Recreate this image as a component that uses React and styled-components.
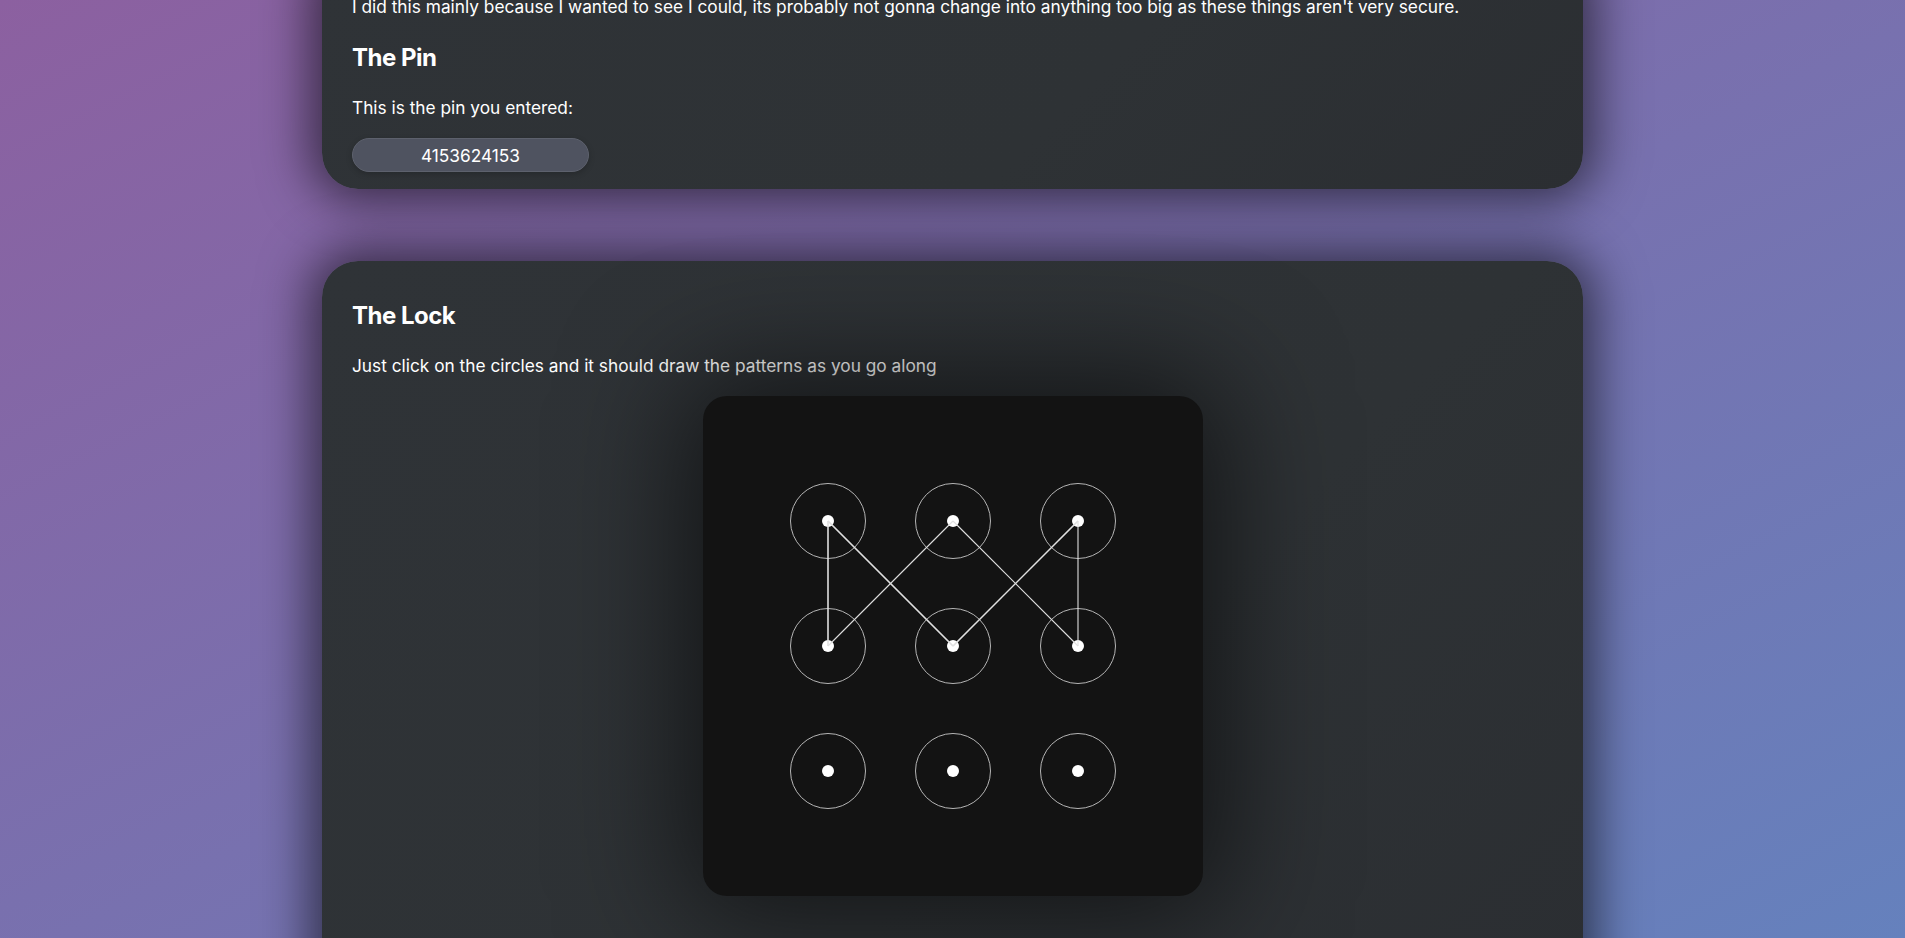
import React from 'react';
import styled, { createGlobalStyle } from 'styled-components';

const GlobalStyle = createGlobalStyle`
  html, body {
    margin: 0;
    padding: 0;
  }
  body {
    font-family: 'Inter', 'Noto Sans', sans-serif;
    color: #fff;
    background: linear-gradient(to bottom right, #8c60a0, #6581bd);
    min-height: 100vh;
  }
`;

// grid order 1..9, left to right, top to bottom
const PIN = '4153624153';
const CELL = 125;

function centre(n) {
  const i = Number(n) - 1;
  return { x: CELL + (i % 3) * CELL, y: CELL + Math.floor(i / 3) * CELL };
}

export default function App() {
  const digits = PIN.split('');
  const segments = digits.slice(1).map((d, i) => [centre(digits[i]), centre(d)]);

  return (
    <>
      <GlobalStyle />
      <Page>
        <Card $top>
          <Text>
            I did this mainly because I wanted to see I could, its probably not gonna change into anything too big as
            these things aren't very secure.
          </Text>
          <Heading>The Pin</Heading>
          <Text>This is the pin you entered:</Text>
          <PinPill>{PIN}</PinPill>
        </Card>

        <Card>
          <Heading>The Lock</Heading>
          <Text>Just click on the circles and it should draw the patterns as you go along</Text>
          <LockBox>
            <Grid>
              {Array.from({ length: 9 }, (_, i) => (
                <Cell key={i}>
                  <Ring>
                    <Dot />
                  </Ring>
                </Cell>
              ))}
            </Grid>
            <Lines viewBox="0 0 500 500">
              {segments.map(([a, b], i) => (
                <line key={i} x1={a.x} y1={a.y} x2={b.x} y2={b.y} />
              ))}
            </Lines>
          </LockBox>
        </Card>
      </Page>
    </>
  );
}

const Page = styled.div`
  height: 100vh;
  overflow: hidden;
  display: flex;
  flex-direction: column;
  align-items: center;
  gap: 72px;
`;

const Card = styled.section`
  flex-shrink: 0;
  width: 1261px;
  box-sizing: border-box;
  margin-top: ${(p) => (p.$top ? '-44px' : '0')};
  padding: 16px 30px ${(p) => (p.$top ? '17px' : '120px')};
  background: linear-gradient(135deg, #2f3337 0%, #2e3235 60%, #2b2e32 100%);
  border-radius: 36px;
  box-shadow: 0 0 50px 12px rgba(0, 0, 0, 0.58);
`;

const Heading = styled.h2`
  margin: 24px 0 0;
  font-size: 24px;
  line-height: 30px;
  font-weight: 700;
  letter-spacing: -0.5px;
`;

const Text = styled.p`
  margin: 23px 0 0;
  font-size: 17.3px;
  line-height: 24px;
`;

const PinPill = styled.div`
  margin-top: 18px;
  width: 237px;
  height: 34px;
  box-sizing: border-box;
  display: flex;
  align-items: center;
  justify-content: center;
  background: #4f5360;
  border: 1px solid #5d616d;
  border-radius: 17px;
  font-size: 17.3px;
  box-shadow: 0 2px 6px rgba(0, 0, 0, 0.2);
`;

const LockBox = styled.div`
  position: relative;
  margin: 18px auto 0;
  width: 500px;
  height: 500px;
  background: #131313;
  border-radius: 24px;
  box-shadow: 0 0 120px 20px rgba(0, 0, 0, 0.6);
`;

const Grid = styled.div`
  box-sizing: border-box;
  height: 100%;
  padding: 62.5px;
  display: grid;
  grid-template-columns: repeat(3, 125px);
  grid-template-rows: repeat(3, 125px);
`;

const Cell = styled.div`
  display: flex;
  align-items: center;
  justify-content: center;
`;

const Ring = styled.div`
  width: 76px;
  height: 76px;
  box-sizing: border-box;
  border: 1px solid #b5b5b5;
  border-radius: 50%;
  display: flex;
  align-items: center;
  justify-content: center;
`;

const Dot = styled.div`
  width: 12px;
  height: 12px;
  border-radius: 50%;
  background: #fff;
`;

const Lines = styled.svg`
  position: absolute;
  inset: 0;
  width: 100%;
  height: 100%;
  pointer-events: none;
  line {
    stroke: #e0e0e0;
    stroke-width: 1.1;
  }
`;
